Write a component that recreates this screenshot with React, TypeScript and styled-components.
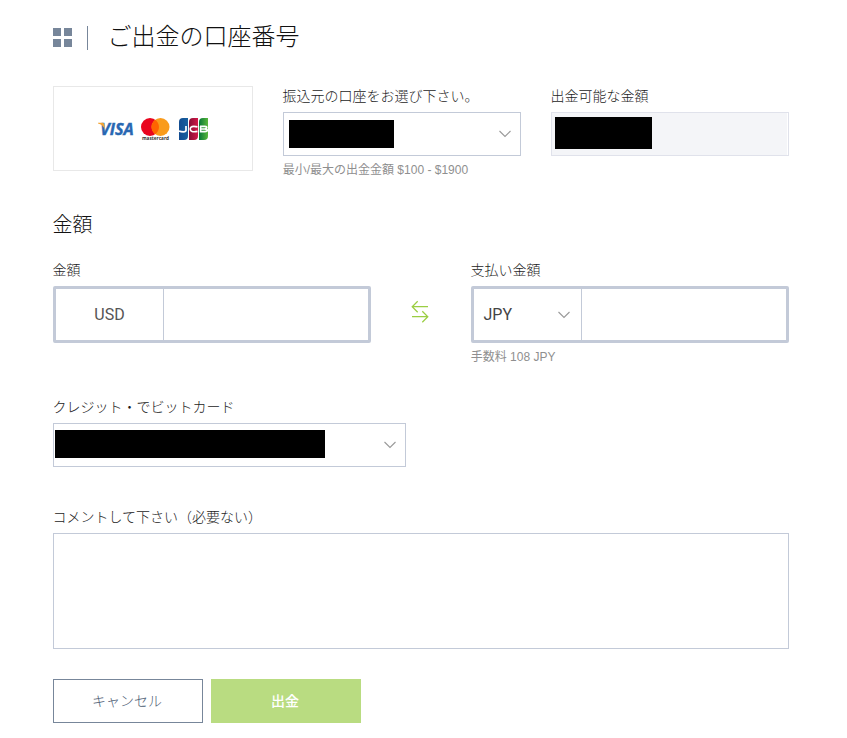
import React from "react";
import styled, { createGlobalStyle } from "styled-components";

const GlobalStyle = createGlobalStyle`
  *, *::before, *::after { box-sizing: border-box; }
  body {
    margin: 0;
    background: #fff;
    color: #444;
    font-family: Roboto, "Noto Sans CJK JP", sans-serif;
    font-size: 14px;
  }
`;

const Page = styled.main`
  width: 847px;
  height: 738px;
  padding: 22px 58px 15px 53px;
  overflow: hidden;
`;

const Header = styled.header`
  display: flex;
  align-items: center;
  height: 30px;
  margin-bottom: 34px;
`;

const MenuGrid = styled.div`
  display: grid;
  grid-template-columns: 8px 8px;
  grid-template-rows: 8px 8px;
  gap: 3px;
  margin-top: 1px;
`;

const MenuCell = styled.span`
  background: #77869a;
`;

const Divider = styled.span`
  width: 1px;
  height: 24px;
  margin: 2px 20px 0 15px;
  background: #77869a;
`;

const Title = styled.h1`
  margin: 0;
  color: #111;
  font-size: 24px;
  font-weight: 300;
  line-height: 28px;
  text-indent: -0.5px;
  white-space: nowrap;
`;

const AccountRow = styled.section`
  display: grid;
  grid-template-columns: 200px 238px 238px;
  column-gap: 30px;
  height: 126px;
`;

const CardLogos = styled.div`
  display: flex;
  align-items: center;
  justify-content: center;
  height: 85px;
  padding: 3px 0 0 1px;
  border: 1px solid #e8e8e8;
`;

const Field = styled.div<{ $width?: number; $height?: number }>`
  width: ${({ $width }) => ($width ? `${$width}px` : "auto")};
  height: ${({ $height }) => ($height ? `${$height}px` : "auto")};
`;

const Label = styled.label`
  display: block;
  height: 20px;
  margin-bottom: 6px;
  color: #1c1c1c;
  font-weight: 300;
  line-height: 20px;
  text-indent: -0.5px;
  white-space: nowrap;
`;

const Hint = styled.div`
  margin-top: 5px;
  color: #8f8f8f;
  font-family: "Liberation Sans", "Noto Sans CJK JP", sans-serif;
  font-size: 12px;
  line-height: 18px;
  text-indent: -0.3px;
  white-space: nowrap;
`;

const SelectBox = styled.div<{ $inset: number }>`
  display: flex;
  align-items: center;
  justify-content: space-between;
  height: 44px;
  padding: 0 8px 0 ${({ $inset }) => $inset}px;
  border: 1px solid #c3cad8;
`;

const ReadOnlyBox = styled.div`
  height: 44px;
  padding: 4px 3px;
  border: 1px solid #e0e2eb;
  background: #f4f5f8;
  box-shadow: inset -1px 0 #fff;
`;

const Redacted = styled.span<{ $width: number; $height: number; $lift?: number }>`
  display: block;
  width: ${({ $width }) => $width}px;
  height: ${({ $height }) => $height}px;
  margin-bottom: ${({ $lift = 0 }) => $lift}px;
  background: #000;
`;

const SectionTitle = styled.h2`
  height: 26px;
  margin: 0 0 22px;
  color: #111;
  font-size: 20px;
  font-weight: 300;
  line-height: 26px;
  text-indent: -0.5px;
`;

const AmountRow = styled.section`
  display: grid;
  grid-template-columns: 318px 100px 318px;
  height: 137px;
`;

const AmountBox = styled.div`
  display: grid;
  grid-template-columns: 108px 1fr;
  height: 57px;
  border: 3px solid #c3cad8;
  border-radius: 2px;
`;

const Currency = styled.div<{ $select?: boolean }>`
  display: flex;
  align-items: center;
  justify-content: ${({ $select }) => ($select ? "space-between" : "center")};
  padding: ${({ $select }) => ($select ? "0 10px 0 9.5px" : "0")};
  border-right: 1px solid #c3cad8;
  color: ${({ $select }) => ($select ? "#444" : "#555")};
  font-size: 16px;
`;

const AmountInput = styled.input`
  width: 100%;
  min-width: 0;
  padding: 0 12px;
  border: 0;
  outline: 0;
  background: transparent;
  font: inherit;
`;

const SwapCell = styled.div`
  display: flex;
  justify-content: center;
  padding: 40px 2px 0 0;
`;

const Comment = styled.textarea`
  display: block;
  width: 736px;
  height: 116px;
  padding: 10px;
  border: 1px solid #c3cad8;
  outline: 0;
  resize: none;
  font: inherit;
`;

const Actions = styled.footer`
  display: flex;
  gap: 8px;
  margin-top: 30px;
`;

const Button = styled.button<{ $primary?: boolean }>`
  width: 150px;
  height: 44px;
  padding: 0 2px 0 0;
  border: 1px solid ${({ $primary }) => ($primary ? "#b9dc81" : "#77869a")};
  background: ${({ $primary }) => ($primary ? "#b9dc81" : "#fff")};
  color: ${({ $primary }) => ($primary ? "#fff" : "#4d5d73")};
  font-family: inherit;
  font-size: 14px;
  font-weight: ${({ $primary }) => ($primary ? 500 : 300)};
  line-height: 20px;
`;

const LogoWord = styled.text`
  font-family: "Open Sans", sans-serif;
  font-weight: 700;
`;

const Chevron = () => (
  <svg width="14" height="8" viewBox="0 0 14 8" fill="none" stroke="#999" strokeWidth="1.1">
    <path d="M1.5 1 7 6.5 12.5 1" />
  </svg>
);

const SwapIcon = () => (
  <svg width="18" height="24" viewBox="0 0 18 24" fill="none" stroke="#9bce43" strokeWidth="1.25">
    <path d="M17 6.7H1.2M6.7 1.2 1.2 6.7l5.5 5.5M1 16.7h15.8M11.3 11.2l5.5 5.5-5.5 5.5" />
  </svg>
);

const PaymentLogos = () => (
  <svg width="112" height="26" viewBox="0 0 112 26" overflow="visible" aria-label="VISA mastercard JCB">
    <defs>
      <linearGradient id="jcbBlue">
        <stop stopColor="#124c91" />
        <stop offset="1" stopColor="#18609f" />
      </linearGradient>
      <linearGradient id="jcbRed">
        <stop stopColor="#870f35" />
        <stop offset="1" stopColor="#d21848" />
      </linearGradient>
      <linearGradient id="jcbGreen">
        <stop stopColor="#087739" />
        <stop offset="1" stopColor="#59b73b" />
      </linearGradient>
    </defs>
    <LogoWord x="2.2" y="17.7" fontSize="16" fontStyle="italic" fill="#2867b2" stroke="#2867b2" strokeWidth=".4" textLength="33.5" lengthAdjust="spacingAndGlyphs">VISA</LogoWord>
    <path d="M0 5.8h4.4q1.7 0 2 1.6L6.9 12.5Q4.8 7.7 0 6.6Z" fill="#f3a536" />
    <circle cx="52" cy="10" r="9" fill="#e9051e" />
    <circle cx="62.5" cy="10" r="9" fill="#f99b1c" />
    <path d="M57.25 2.7a9 9 0 0 1 0 14.6 9 9 0 0 1 0-14.6Z" fill="#ff6400" />
    <LogoWord x="44" y="22.7" fontSize="5" fill="#333" textLength="27" lengthAdjust="spacingAndGlyphs">mastercard</LogoWord>
    <path d="M81 5q0-4 4-4h5v18q0 4-4 4h-5Z" fill="url(#jcbBlue)" />
    <path d="M91 5q0-4 4-4h5v18q0 4-4 4h-5Z" fill="url(#jcbRed)" />
    <path d="M101 5q0-4 4-4h5v18q0 4-4 4h-5Z" fill="url(#jcbGreen)" />
    <path d="M88 9v4.2q0 1.6-2.6 1.6-2.4 0-4.4-.8M99.5 9.8q-7.3-1.5-7.3 2.2t7.3 2.4M102 9.4h4.8q2 0 2 1.2t-2 1.4h-4.4m4.4 0q2.5 0 2.5 1.3t-2.5 1.3h-4.2V9" fill="none" stroke="#fff" strokeWidth="1.7" />
  </svg>
);

export default function App() {
  return (
    <>
      <GlobalStyle />
      <Page>
        <Header>
          <MenuGrid>
            <MenuCell />
            <MenuCell />
            <MenuCell />
            <MenuCell />
          </MenuGrid>
          <Divider />
          <Title>ご出金の口座番号</Title>
        </Header>
        <AccountRow>
          <CardLogos>
            <PaymentLogos />
          </CardLogos>
          <Field>
            <Label>振込元の口座をお選び下さい。</Label>
            <SelectBox $inset={5}>
              <Redacted $width={105} $height={28} />
              <Chevron />
            </SelectBox>
            <Hint>最小/最大の出金金額 $100 - $1900</Hint>
          </Field>
          <Field>
            <Label>出金可能な金額</Label>
            <ReadOnlyBox>
              <Redacted $width={97} $height={32} />
            </ReadOnlyBox>
          </Field>
        </AccountRow>
        <SectionTitle>金額</SectionTitle>
        <AmountRow>
          <Field>
            <Label htmlFor="amount">金額</Label>
            <AmountBox>
              <Currency>USD</Currency>
              <AmountInput id="amount" />
            </AmountBox>
          </Field>
          <SwapCell>
            <SwapIcon />
          </SwapCell>
          <Field>
            <Label htmlFor="payment">支払い金額</Label>
            <AmountBox>
              <Currency $select>
                JPY
                <Chevron />
              </Currency>
              <AmountInput id="payment" />
            </AmountBox>
            <Hint>手数料 108 JPY</Hint>
          </Field>
        </AmountRow>
        <Field $width={353} $height={110}>
          <Label>クレジット・でビットカード</Label>
          <SelectBox $inset={1}>
            <Redacted $width={270} $height={28} $lift={2} />
            <Chevron />
          </SelectBox>
        </Field>
        <Field>
          <Label htmlFor="comment">コメントして下さい（必要ない）</Label>
          <Comment id="comment" />
        </Field>
        <Actions>
          <Button type="button">キャンセル</Button>
          <Button type="button" $primary>出金</Button>
        </Actions>
      </Page>
    </>
  );
}
